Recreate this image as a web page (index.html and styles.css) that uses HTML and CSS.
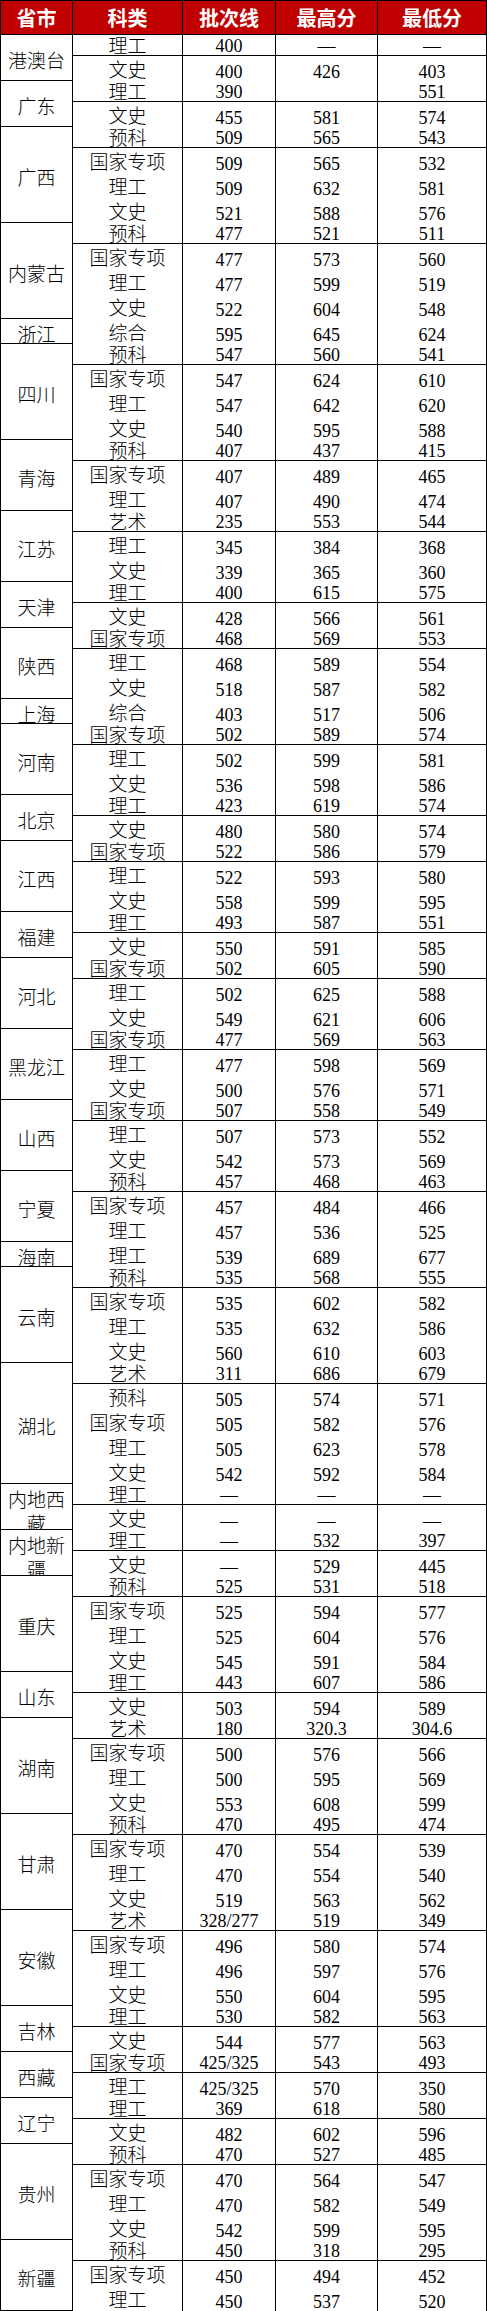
FILE: index.html
```html
<!DOCTYPE html>
<html lang="zh-CN">
<head>
<meta charset="utf-8">
<title>录取分数</title>
<link rel="stylesheet" href="styles.css">
</head>
<body>
<div class="tbl">
  <div class="head"><div>省市</div><div>科类</div><div>批次线</div><div>最高分</div><div>最低分</div></div>

  <div class="grp"><div class="prov">港澳台</div><div class="rows">
    <div class="r s"><span class="c">理工</span><span>400</span><span>—</span><span>—</span></div>
    <div class="r"><span class="c">文史</span><span>400</span><span>426</span><span>403</span></div>
  </div></div>

  <div class="grp"><div class="prov">广东</div><div class="rows">
    <div class="r s"><span class="c">理工</span><span>390</span><span></span><span>551</span></div>
    <div class="r"><span class="c">文史</span><span>455</span><span>581</span><span>574</span></div>
  </div></div>

  <div class="grp"><div class="prov">广西</div><div class="rows">
    <div class="r s"><span class="c">预科</span><span>509</span><span>565</span><span>543</span></div>
    <div class="r"><span class="c">国家专项</span><span>509</span><span>565</span><span>532</span></div>
    <div class="r"><span class="c">理工</span><span>509</span><span>632</span><span>581</span></div>
    <div class="r"><span class="c">文史</span><span>521</span><span>588</span><span>576</span></div>
  </div></div>

  <div class="grp"><div class="prov">内蒙古</div><div class="rows">
    <div class="r s"><span class="c">预科</span><span>477</span><span>521</span><span>511</span></div>
    <div class="r"><span class="c">国家专项</span><span>477</span><span>573</span><span>560</span></div>
    <div class="r"><span class="c">理工</span><span>477</span><span>599</span><span>519</span></div>
    <div class="r"><span class="c">文史</span><span>522</span><span>604</span><span>548</span></div>
  </div></div>

  <div class="grp"><div class="prov">浙江</div><div class="rows">
    <div class="r"><span class="c">综合</span><span>595</span><span>645</span><span>624</span></div>
  </div></div>

  <div class="grp"><div class="prov">四川</div><div class="rows">
    <div class="r s"><span class="c">预科</span><span>547</span><span>560</span><span>541</span></div>
    <div class="r"><span class="c">国家专项</span><span>547</span><span>624</span><span>610</span></div>
    <div class="r"><span class="c">理工</span><span>547</span><span>642</span><span>620</span></div>
    <div class="r"><span class="c">文史</span><span>540</span><span>595</span><span>588</span></div>
  </div></div>

  <div class="grp"><div class="prov">青海</div><div class="rows">
    <div class="r s"><span class="c">预科</span><span>407</span><span>437</span><span>415</span></div>
    <div class="r"><span class="c">国家专项</span><span>407</span><span>489</span><span>465</span></div>
    <div class="r"><span class="c">理工</span><span>407</span><span>490</span><span>474</span></div>
  </div></div>

  <div class="grp"><div class="prov">江苏</div><div class="rows">
    <div class="r s"><span class="c">艺术</span><span>235</span><span>553</span><span>544</span></div>
    <div class="r"><span class="c">理工</span><span>345</span><span>384</span><span>368</span></div>
    <div class="r"><span class="c">文史</span><span>339</span><span>365</span><span>360</span></div>
  </div></div>

  <div class="grp"><div class="prov">天津</div><div class="rows">
    <div class="r s"><span class="c">理工</span><span>400</span><span>615</span><span>575</span></div>
    <div class="r"><span class="c">文史</span><span>428</span><span>566</span><span>561</span></div>
  </div></div>

  <div class="grp"><div class="prov">陕西</div><div class="rows">
    <div class="r s"><span class="c">国家专项</span><span>468</span><span>569</span><span>553</span></div>
    <div class="r"><span class="c">理工</span><span>468</span><span>589</span><span>554</span></div>
    <div class="r"><span class="c">文史</span><span>518</span><span>587</span><span>582</span></div>
  </div></div>

  <div class="grp"><div class="prov">上海</div><div class="rows">
    <div class="r"><span class="c">综合</span><span>403</span><span>517</span><span>506</span></div>
  </div></div>

  <div class="grp"><div class="prov">河南</div><div class="rows">
    <div class="r s"><span class="c">国家专项</span><span>502</span><span>589</span><span>574</span></div>
    <div class="r"><span class="c">理工</span><span>502</span><span>599</span><span>581</span></div>
    <div class="r"><span class="c">文史</span><span>536</span><span>598</span><span>586</span></div>
  </div></div>

  <div class="grp"><div class="prov">北京</div><div class="rows">
    <div class="r s"><span class="c">理工</span><span>423</span><span>619</span><span>574</span></div>
    <div class="r"><span class="c">文史</span><span>480</span><span>580</span><span>574</span></div>
  </div></div>

  <div class="grp"><div class="prov">江西</div><div class="rows">
    <div class="r s"><span class="c">国家专项</span><span>522</span><span>586</span><span>579</span></div>
    <div class="r"><span class="c">理工</span><span>522</span><span>593</span><span>580</span></div>
    <div class="r"><span class="c">文史</span><span>558</span><span>599</span><span>595</span></div>
  </div></div>

  <div class="grp"><div class="prov">福建</div><div class="rows">
    <div class="r s"><span class="c">理工</span><span>493</span><span>587</span><span>551</span></div>
    <div class="r"><span class="c">文史</span><span>550</span><span>591</span><span>585</span></div>
  </div></div>

  <div class="grp"><div class="prov">河北</div><div class="rows">
    <div class="r s"><span class="c">国家专项</span><span>502</span><span>605</span><span>590</span></div>
    <div class="r"><span class="c">理工</span><span>502</span><span>625</span><span>588</span></div>
    <div class="r"><span class="c">文史</span><span>549</span><span>621</span><span>606</span></div>
  </div></div>

  <div class="grp"><div class="prov">黑龙江</div><div class="rows">
    <div class="r s"><span class="c">国家专项</span><span>477</span><span>569</span><span>563</span></div>
    <div class="r"><span class="c">理工</span><span>477</span><span>598</span><span>569</span></div>
    <div class="r"><span class="c">文史</span><span>500</span><span>576</span><span>571</span></div>
  </div></div>

  <div class="grp"><div class="prov">山西</div><div class="rows">
    <div class="r s"><span class="c">国家专项</span><span>507</span><span>558</span><span>549</span></div>
    <div class="r"><span class="c">理工</span><span>507</span><span>573</span><span>552</span></div>
    <div class="r"><span class="c">文史</span><span>542</span><span>573</span><span>569</span></div>
  </div></div>

  <div class="grp"><div class="prov">宁夏</div><div class="rows">
    <div class="r s"><span class="c">预科</span><span>457</span><span>468</span><span>463</span></div>
    <div class="r"><span class="c">国家专项</span><span>457</span><span>484</span><span>466</span></div>
    <div class="r"><span class="c">理工</span><span>457</span><span>536</span><span>525</span></div>
  </div></div>

  <div class="grp"><div class="prov">海南</div><div class="rows">
    <div class="r"><span class="c">理工</span><span>539</span><span>689</span><span>677</span></div>
  </div></div>

  <div class="grp"><div class="prov">云南</div><div class="rows">
    <div class="r s"><span class="c">预科</span><span>535</span><span>568</span><span>555</span></div>
    <div class="r"><span class="c">国家专项</span><span>535</span><span>602</span><span>582</span></div>
    <div class="r"><span class="c">理工</span><span>535</span><span>632</span><span>586</span></div>
    <div class="r"><span class="c">文史</span><span>560</span><span>610</span><span>603</span></div>
  </div></div>

  <div class="grp"><div class="prov">湖北</div><div class="rows">
    <div class="r s"><span class="c">艺术</span><span>311</span><span>686</span><span>679</span></div>
    <div class="r"><span class="c">预科</span><span>505</span><span>574</span><span>571</span></div>
    <div class="r"><span class="c">国家专项</span><span>505</span><span>582</span><span>576</span></div>
    <div class="r"><span class="c">理工</span><span>505</span><span>623</span><span>578</span></div>
    <div class="r"><span class="c">文史</span><span>542</span><span>592</span><span>584</span></div>
  </div></div>

  <div class="grp"><div class="prov two">内地西藏</div><div class="rows">
    <div class="r s"><span class="c">理工</span><span>—</span><span>—</span><span>—</span></div>
    <div class="r"><span class="c">文史</span><span>—</span><span>—</span><span>—</span></div>
  </div></div>

  <div class="grp"><div class="prov two">内地新疆</div><div class="rows">
    <div class="r s"><span class="c">理工</span><span>—</span><span>532</span><span>397</span></div>
    <div class="r"><span class="c">文史</span><span>—</span><span>529</span><span>445</span></div>
  </div></div>

  <div class="grp"><div class="prov">重庆</div><div class="rows">
    <div class="r s"><span class="c">预科</span><span>525</span><span>531</span><span>518</span></div>
    <div class="r"><span class="c">国家专项</span><span>525</span><span>594</span><span>577</span></div>
    <div class="r"><span class="c">理工</span><span>525</span><span>604</span><span>576</span></div>
    <div class="r"><span class="c">文史</span><span>545</span><span>591</span><span>584</span></div>
  </div></div>

  <div class="grp"><div class="prov">山东</div><div class="rows">
    <div class="r s"><span class="c">理工</span><span>443</span><span>607</span><span>586</span></div>
    <div class="r"><span class="c">文史</span><span>503</span><span>594</span><span>589</span></div>
  </div></div>

  <div class="grp"><div class="prov">湖南</div><div class="rows">
    <div class="r s"><span class="c">艺术</span><span>180</span><span>320.3</span><span>304.6</span></div>
    <div class="r"><span class="c">国家专项</span><span>500</span><span>576</span><span>566</span></div>
    <div class="r"><span class="c">理工</span><span>500</span><span>595</span><span>569</span></div>
    <div class="r"><span class="c">文史</span><span>553</span><span>608</span><span>599</span></div>
  </div></div>

  <div class="grp"><div class="prov">甘肃</div><div class="rows">
    <div class="r s"><span class="c">预科</span><span>470</span><span>495</span><span>474</span></div>
    <div class="r"><span class="c">国家专项</span><span>470</span><span>554</span><span>539</span></div>
    <div class="r"><span class="c">理工</span><span>470</span><span>554</span><span>540</span></div>
    <div class="r"><span class="c">文史</span><span>519</span><span>563</span><span>562</span></div>
  </div></div>

  <div class="grp"><div class="prov">安徽</div><div class="rows">
    <div class="r s"><span class="c">艺术</span><span>328/277</span><span>519</span><span>349</span></div>
    <div class="r"><span class="c">国家专项</span><span>496</span><span>580</span><span>574</span></div>
    <div class="r"><span class="c">理工</span><span>496</span><span>597</span><span>576</span></div>
    <div class="r"><span class="c">文史</span><span>550</span><span>604</span><span>595</span></div>
  </div></div>

  <div class="grp"><div class="prov">吉林</div><div class="rows">
    <div class="r s"><span class="c">理工</span><span>530</span><span>582</span><span>563</span></div>
    <div class="r"><span class="c">文史</span><span>544</span><span>577</span><span>563</span></div>
  </div></div>

  <div class="grp"><div class="prov">西藏</div><div class="rows">
    <div class="r s"><span class="c">国家专项</span><span>425/325</span><span>543</span><span>493</span></div>
    <div class="r"><span class="c">理工</span><span>425/325</span><span>570</span><span>350</span></div>
  </div></div>

  <div class="grp"><div class="prov">辽宁</div><div class="rows">
    <div class="r s"><span class="c">理工</span><span>369</span><span>618</span><span>580</span></div>
    <div class="r"><span class="c">文史</span><span>482</span><span>602</span><span>596</span></div>
  </div></div>

  <div class="grp"><div class="prov">贵州</div><div class="rows">
    <div class="r s"><span class="c">预科</span><span>470</span><span>527</span><span>485</span></div>
    <div class="r"><span class="c">国家专项</span><span>470</span><span>564</span><span>547</span></div>
    <div class="r"><span class="c">理工</span><span>470</span><span>582</span><span>549</span></div>
    <div class="r"><span class="c">文史</span><span>542</span><span>599</span><span>595</span></div>
  </div></div>

  <div class="grp"><div class="prov">新疆</div><div class="rows">
    <div class="r s"><span class="c">预科</span><span>450</span><span>318</span><span>295</span></div>
    <div class="r"><span class="c">国家专项</span><span>450</span><span>494</span><span>452</span></div>
    <div class="r"><span class="c">理工</span><span>450</span><span>537</span><span>520</span></div>
  </div></div>
</div>
</body>
</html>
```

FILE: styles.css
```css
html, body {
  margin: 0;
  padding: 0;
  background: #fff;
}

.tbl {
  width: 487px;
  box-sizing: border-box;
  padding: 1px;
  background: #000;
  display: flex;
  flex-direction: column;
  gap: 1px;
  color: #000;
  font-family: "Liberation Serif", "Noto Sans CJK SC", serif;
}

.head {
  display: grid;
  grid-template-columns: 71px 109px 92px 101px 108px;
  gap: 1px;
  height: 33px;
}

.head div {
  background: #c00000;
  color: #fff;
  font-family: "Noto Sans CJK SC", sans-serif;
  font-weight: bold;
  font-size: 20px;
  line-height: 30px;
  display: flex;
  align-items: center;
  justify-content: center;
  box-sizing: border-box;
}

.grp {
  display: grid;
  grid-template-columns: 71px 1fr;
  gap: 1px;
}

.prov {
  contain: size;
  background: #fff;
  display: flex;
  align-items: center;
  justify-content: center;
  text-align: center;
  font-family: "Noto Sans CJK SC", sans-serif;
  font-weight: 300;
  font-size: 19px;
  line-height: 24px;
  padding-top: 5px;
  box-sizing: border-box;
}

.prov.two {
  padding-top: 8px;
}

.rows {
  display: flex;
  flex-direction: column;
  gap: 1px;
}

.r {
  display: grid;
  grid-template-columns: 109px 92px 101px 108px;
  gap: 1px;
  height: 24px;
}

.r.s {
  height: 20px;
}

.r span {
  background: #fff;
  display: flex;
  align-items: flex-end;
  justify-content: center;
  white-space: nowrap;
  font-size: 18px;
  line-height: 20px;
}

.r.s span {
  line-height: 18px;
}

.r span.c {
  font-family: "Noto Sans CJK SC", sans-serif;
  font-weight: 300;
  font-size: 19px;
  line-height: 26px;
}

.r.s span.c {
  line-height: 20px;
}
```
